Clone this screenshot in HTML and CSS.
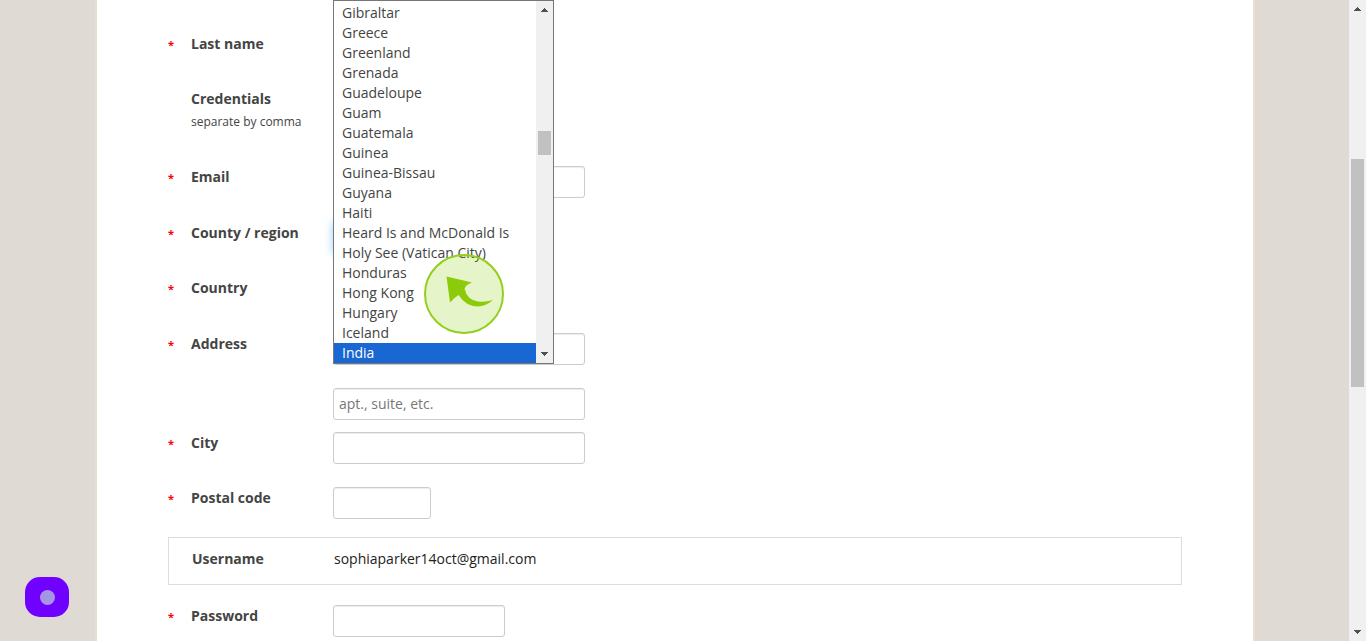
FILE: index.html
```html
<!DOCTYPE html>
<html lang="en">
<head>
<meta charset="utf-8">
<title>Create account</title>
<link rel="stylesheet" href="styles.css">
</head>
<body>
<div class="backdrop">
  <main class="page">
    <form class="form">
      <div class="row">
        <span class="required">*</span>
        <label class="label" for="last-name">Last name</label>
        <input class="field field-medium" id="last-name" type="text">
      </div>
      <div class="row row-tall">
        <span class="required"></span>
        <label class="label" for="credentials">Credentials<small class="hint">separate by comma</small></label>
        <input class="field field-medium" id="credentials" type="text">
      </div>
      <div class="row row-spaced">
        <span class="required">*</span>
        <label class="label" for="email">Email</label>
        <input class="field" id="email" type="email">
      </div>
      <div class="row">
        <span class="required">*</span>
        <label class="label" for="county">County / region</label>
        <div class="picker">
          <select class="field field-select field-active" id="county"><option>India</option></select>
          <div class="popup">
            <ul class="options" role="listbox" aria-label="County / region">
              <li class="option" role="option">Gibraltar</li>
              <li class="option" role="option">Greece</li>
              <li class="option" role="option">Greenland</li>
              <li class="option" role="option">Grenada</li>
              <li class="option" role="option">Guadeloupe</li>
              <li class="option" role="option">Guam</li>
              <li class="option" role="option">Guatemala</li>
              <li class="option" role="option">Guinea</li>
              <li class="option" role="option">Guinea-Bissau</li>
              <li class="option" role="option">Guyana</li>
              <li class="option" role="option">Haiti</li>
              <li class="option" role="option">Heard Is and McDonald Is</li>
              <li class="option" role="option">Holy See (Vatican City)</li>
              <li class="option" role="option">Honduras</li>
              <li class="option" role="option">Hong Kong</li>
              <li class="option" role="option">Hungary</li>
              <li class="option" role="option">Iceland</li>
              <li class="option option-selected" role="option" aria-selected="true">India</li>
            </ul>
            <div class="scrollbar">
              <svg class="arrow" viewBox="0 0 17 17" shape-rendering="crispEdges"><path d="M8 7h1v1h1v1h1v1h1v1H5v-1h1V9h1V8h1z"/></svg>
              <div class="track"><div class="thumb thumb-list"></div></div>
              <svg class="arrow" viewBox="0 0 17 17" shape-rendering="crispEdges"><path d="M5 6h7v1h-1v1h-1v1H9v1H8V9H7V8H6V7H5z"/></svg>
            </div>
            <svg class="pointer" viewBox="0 0 80 80" aria-hidden="true">
              <circle cx="40" cy="40" r="39" fill="#8ccb0a" fill-opacity=".22" stroke="#94cf1c" stroke-width="2"/>
              <path d="M22.500 22.500L48 28.500Q42 30.500 40.500 34.500Q43 46 54 47.500Q61 48.500 69 46Q62 52 54 52.500Q42 52.500 34.500 41Q30 44 26 48.500Z" fill="#8ccb0a"/>
            </svg>
          </div>
        </div>
      </div>
      <div class="row row-spaced">
        <span class="required">*</span>
        <label class="label" for="country">Country</label>
        <select class="field field-select" id="country"><option>India</option></select>
      </div>
      <div class="row">
        <span class="required">*</span>
        <label class="label" for="address">Address</label>
        <input class="field" id="address" type="text">
      </div>
      <div class="row row-close">
        <span class="required"></span>
        <span class="label"></span>
        <input class="field" type="text" placeholder="apt., suite, etc." aria-label="Apartment or suite">
      </div>
      <div class="row">
        <span class="required">*</span>
        <label class="label" for="city">City</label>
        <input class="field" id="city" type="text">
      </div>
      <div class="row">
        <span class="required">*</span>
        <label class="label" for="postal">Postal code</label>
        <input class="field field-short" id="postal" type="text">
      </div>
      <div class="account">
        <span class="label">Username</span>
        <span class="username">sophiaparker14oct@gmail.com</span>
      </div>
      <div class="row row-last">
        <span class="required">*</span>
        <label class="label" for="password">Password</label>
        <input class="field field-medium" id="password" type="password">
      </div>
    </form>
  </main>
  <button class="recorder" type="button" aria-label="Recorder"><span class="recorder-dot"></span></button>
</div>
<div class="scrollbar">
  <svg class="arrow" viewBox="0 0 17 17" shape-rendering="crispEdges"><path d="M8 7h1v1h1v1h1v1h1v1H5v-1h1V9h1V8h1z"/></svg>
  <div class="track"><div class="thumb thumb-page"></div></div>
  <svg class="arrow" viewBox="0 0 17 17" shape-rendering="crispEdges"><path d="M5 6h7v1h-1v1h-1v1H9v1H8V9H7V8H6V7H5z"/></svg>
</div>
</body>
</html>
```

FILE: styles.css
```css
* {
  box-sizing: border-box;
}

body {
  margin: 0;
  display: flex;
  height: 100vh;
  overflow: hidden;
  font: 14px/20px "Open Sans", "Noto Sans", sans-serif;
  color: #444;
}

.backdrop {
  flex: 1;
  display: flex;
  background: #dfdad3;
}

.page {
  flex: 1;
  margin: 0 94px 0 95px;
  padding: 33px 71px 0;
  background: #fff;
  border: solid #e8dfce;
  border-width: 0 2px;
}

.row {
  display: grid;
  grid-template-columns: 23px 142px 1fr;
  align-items: start;
  min-height: 32px;
  margin-bottom: 23px;
}

.row-tall {
  min-height: 55px;
}

.row-spaced {
  margin-bottom: 24px;
}

.row-close {
  margin-bottom: 12px;
}

.row-last {
  margin-bottom: 0;
}

.required {
  padding-top: 2px;
  font-size: 11px;
  font-weight: 700;
  color: #f00;
}

.label {
  padding-top: 1px;
  font-weight: 700;
  color: #444;
}

.hint {
  display: block;
  padding-top: 3px;
  font-size: 12px;
  font-weight: 400;
}

.field {
  width: 252px;
  height: 32px;
  margin: 0;
  padding: 3px 5px 5px;
  font: inherit;
  color: #444;
  background: #fff;
  border: 1px solid #ccc;
  border-radius: 3px;
  box-shadow: inset 0 1px 1px rgba(0, 0, 0, 0.075);
}

.field::placeholder {
  color: #777;
}

.field-short {
  width: 98px;
}

.field-medium {
  width: 172px;
}

.field-select {
  width: 210px;
}

.field-active {
  border-color: #52a8ec;
  box-shadow: 0 0 8px rgba(82, 168, 236, 0.6);
}

.picker {
  position: relative;
}

.popup {
  position: absolute;
  top: -222px;
  left: 0;
  z-index: 1;
  display: flex;
  width: 221px;
  background: #fff;
  border: 1px solid #767676;
}

.options {
  flex: 1;
  margin: 0;
  padding: 2px 0 0;
  list-style: none;
}

.option {
  padding: 0 8px;
  white-space: nowrap;
}

.option-selected {
  color: #fff;
  background: #1967d2;
}

.scrollbar {
  display: flex;
  flex-direction: column;
  width: 17px;
  background: #f0f0f0;
}

.arrow {
  width: 17px;
  height: 17px;
  fill: #505050;
}

.track {
  flex: 1;
  padding: 0 2px;
}

.thumb {
  background: #c1c1c1;
}

.thumb-list {
  height: 24px;
  margin-top: 113px;
}

.thumb-page {
  height: 228px;
  margin-top: 142px;
}

.pointer {
  position: absolute;
  top: 253px;
  left: 90px;
  width: 80px;
  height: 80px;
}

.account {
  display: grid;
  grid-template-columns: 142px 1fr;
  margin: -5px 0 20px;
  padding: 10px 23px 15px;
  border: 1px solid #ddd;
}

.username {
  padding-top: 1px;
  color: #222;
}

.recorder {
  position: fixed;
  bottom: 24px;
  left: 25px;
  display: grid;
  place-items: center;
  width: 44px;
  height: 40px;
  padding: 0;
  background: #7000ff;
  border: 0;
  border-radius: 15px;
}

.recorder-dot {
  width: 15px;
  height: 15px;
  background: #a596e4;
  border-radius: 50%;
}
```
